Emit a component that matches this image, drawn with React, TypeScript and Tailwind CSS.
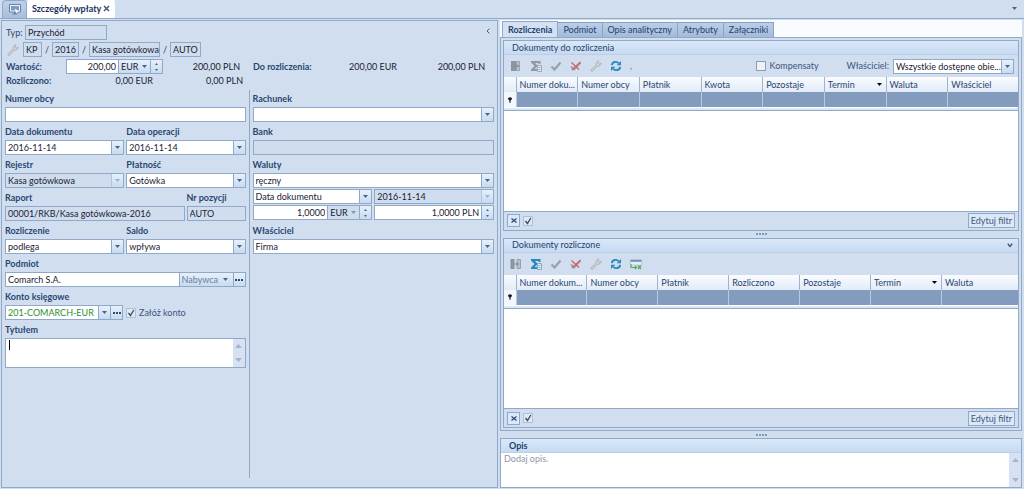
import { useId, type ReactNode } from "react";

const BTN = "bg-gradient-to-b from-[#e6f0fb] to-[#c9dbf0]";
const CTRL = "h-[15px] border border-[#91a9c8]";

function Down({ className = "text-[#4a6286]" }: { className?: string }) {
  return (
    <svg viewBox="0 0 5 3" className={`h-[3px] w-[5px] ${className}`} aria-hidden="true">
      <path d="M0 0h5L2.5 3z" fill="currentColor" />
    </svg>
  );
}

function Field({ label, children, className = "" }: { label: string; children: (id: string) => ReactNode; className?: string }) {
  const id = useId();
  return (
    <div className={`flex h-[33px] min-w-0 flex-col ${className}`}>
      <label htmlFor={id} className="h-[17px] shrink-0 leading-[17px] font-bold whitespace-nowrap text-[#2a4770]">
        {label}
      </label>
      {children(id)}
    </div>
  );
}

function Select({ id, value, disabled = false, className = "", label }: { id?: string; value: string; disabled?: boolean; className?: string; label?: string }) {
  return (
    <div className={`relative flex min-w-0 ${CTRL} ${disabled ? "bg-[#cfddee]" : "bg-white"} ${className}`}>
      <select id={id} aria-label={label} disabled={disabled} defaultValue={value} className="w-full min-w-0 appearance-none truncate pr-3 pl-[2px] leading-[13px] text-[#1a2233] opacity-100 outline-none">
        <option>{value}</option>
      </select>
      <span className={`pointer-events-none absolute inset-y-0 right-0 flex w-3 items-center justify-center border-l ${disabled ? "border-[#b4c6de]" : "border-[#91a9c8]"} ${BTN}`}>
        <Down className={disabled ? "text-[#9fb2cc]" : "text-[#4a6286]"} />
      </span>
    </div>
  );
}

function TextBox({ id, value = "", readOnly = false, className = "", label }: { id?: string; value?: string; readOnly?: boolean; className?: string; label?: string }) {
  return (
    <input
      id={id}
      aria-label={label}
      defaultValue={value}
      readOnly={readOnly}
      className={`min-w-0 pl-[2px] leading-[13px] text-[#1a2233] outline-none ${CTRL} ${readOnly ? "bg-[#cfddee]" : "bg-white"} ${className}`}
    />
  );
}

function Spin() {
  return (
    <button type="button" aria-label="Zmień wartość" className={`flex w-3 shrink-0 flex-col items-center justify-center gap-[4px] border-l border-[#91a9c8] ${BTN}`}>
      <svg viewBox="0 0 3 2" className="h-[2px] w-[3px]"><path d="M0 2h3L1.5 0z" fill="#4a6286" /></svg>
      <svg viewBox="0 0 3 2" className="h-[2px] w-[3px]"><path d="M0 0h3L1.5 2z" fill="#4a6286" /></svg>
    </button>
  );
}

function Amount({ id, value, unit, locked = false, label, className = "" }: { id?: string; value: string; unit?: string; locked?: boolean; label: string; className?: string }) {
  return (
    <div className={`flex min-w-0 bg-white ${CTRL} ${className}`}>
      <input id={id} aria-label={label} defaultValue={value} className="w-full min-w-0 flex-1 pr-[2px] text-right leading-[13px] text-[#1a2233] outline-none" />
      {unit && (
        <div className={`relative flex w-8 shrink-0 border-l border-[#91a9c8] ${locked ? "bg-[#cfddee]" : BTN}`}>
          <select aria-label={`${label} – waluta`} defaultValue={unit} className="w-full appearance-none pl-[2px] leading-[13px] text-[#1a2233] outline-none">
            <option>{unit}</option>
          </select>
          <span className="pointer-events-none absolute inset-y-0 right-[3px] flex items-center"><Down className={locked ? "text-[#8096b5]" : "text-[#4a6286]"} /></span>
        </div>
      )}
      <Spin />
    </div>
  );
}

function Wrench({ className }: { className: string }) {
  return (
    <svg viewBox="0 0 12 12" className={className} aria-hidden="true">
      <path d="M1.2 9.6 6 5.4C5.400 3.300 6.600 1.300 9 .9L7.800 2.800 9.200 4.300 11.200 3.100C11 5.400 9 6.700 7.100 6.300L2.800 11.200C1.700 12 .3 10.700 1.200 9.600Z" fill="#d3d3d0" stroke="#a6abb3" strokeWidth=".8" />
    </svg>
  );
}

function ToolButton({ label, children }: { label: string; children: ReactNode }) {
  return (
    <button type="button" aria-label={label} className="flex size-3 items-center justify-center">
      {children}
    </button>
  );
}

function Tools({ active }: { active?: boolean }) {
  const icon = "size-3";
  return (
    <div className="flex items-center gap-2">
      <ToolButton label="Powiąż">
        {active ? (
          <svg viewBox="0 0 12 12" className={icon}>
            <path d="M.5 1h4v10h-4z" fill="#8c949f" />
            <path d="M7 1.500h3.500v9H7z" fill="#b9c1cb" stroke="#98a1ad" />
            <path d="M4 6h4.500M7 4.500 8.500 6 7 7.500" stroke="#7d8898" fill="none" />
          </svg>
        ) : (
          <svg viewBox="0 0 12 12" className={icon}>
            <path d="M1 1h5.500v10H1z" fill="#8c949f" />
            <path d="M6.500 1.500H9.500v9h-3z" fill="#bcc3cd" stroke="#9aa2ad" />
            <path d="M5 6h3.500M7 4.500 8.500 6 7 7.500" stroke="#7d8898" fill="none" />
          </svg>
        )}
      </ToolButton>
      <ToolButton label="Suma">
        <svg viewBox="0 0 12 12" className={icon}>
          <path d="M1 1h9.500v3H9L8 3H5l3 3-3.500 3H7v2H1V9.500L4.500 6 1 2.500Z" fill={active ? "#2f86b8" : "#92999f"} />
          <path d="M7.500 5.500h4v6h-4z" fill="#e4eaf2" stroke={active ? "#6d9dbd" : "#9098a2"} strokeWidth=".8" />
          <path d="M8.500 7.500h2M8.500 9.500h2" stroke={active ? "#6d9dbd" : "#9098a2"} strokeWidth=".8" />
        </svg>
      </ToolButton>
      <ToolButton label="Zatwierdź">
        <svg viewBox="0 0 12 12" className={icon}><path d="m1.500 6.500 3 3 6-7" fill="none" stroke="#9ba1a8" strokeWidth="2.300" /></svg>
      </ToolButton>
      <ToolButton label="Anuluj">
        <svg viewBox="0 0 12 12" className={icon}>
          <path d="m1 6.500 3 3 6.500-7" fill="none" stroke="#a2a3aa" strokeWidth="2" />
          <path d="m1.500 2.500 7.500 7M10.500 2l-8.500 8" fill="none" stroke="#cf5f62" strokeWidth="1.200" />
        </svg>
      </ToolButton>
      <ToolButton label="Narzędzia"><Wrench className={icon} /></ToolButton>
      <ToolButton label="Odśwież">
        <svg viewBox="0 0 12 12" className={icon}>
          <path d="M1.800 5.200C2.300 1.600 6.500.900 8.600 3.200M10.200 6.800C9.700 10.400 5.500 11.100 3.400 8.800" fill="none" stroke="#2a8bbd" strokeWidth="1.900" />
          <path d="M11 1v4.300H6.700zM1 11V6.700h4.300z" fill="#2a8bbd" />
        </svg>
      </ToolButton>
      {active ? (
        <ToolButton label="Eksportuj">
          <svg viewBox="0 0 12 12" className={icon}>
            <path d="M.5 2h11v5H.5z" fill="#e5edf6" stroke="#a9b9cc" strokeWidth=".6" />
            <path d="M.5 1.800h11v2H.5z" fill="#6f93b8" />
            <path d="M1 6v3.500h5M5 8l1.500 1.500L5 11M8 7.500l3 3.500M11 7.500 8 11" fill="none" stroke="#55ab57" strokeWidth="1.200" />
          </svg>
        </ToolButton>
      ) : (
        <span className="text-[#5f7597]">,</span>
      )}
    </div>
  );
}

function FilterTable({ columns, label, wide = false }: { columns: string[]; label: string; wide?: boolean }) {
  return (
    <div className="flex flex-1 flex-col bg-white">
      <table className="w-full table-fixed border-collapse" aria-label={label}>
        <colgroup>
          <col className="w-[12px]" />
          {columns.map((c, i) => (
            <col key={c} className={i === columns.length - 1 ? "" : wide ? "w-[13.8%]" : "w-[12%]"} />
          ))}
        </colgroup>
        <thead>
          <tr className="h-[15px] bg-gradient-to-b from-[#fafcff] to-[#e1ebf8] text-left text-[#2a456e]">
            <th aria-label="Filtr" className="p-0" />
            {columns.map((c) => (
              <th key={c} scope="col" className="border-l border-[#9db3d0] p-0 pl-[3px] leading-[15px] font-normal whitespace-nowrap">
                {c === "Termin" ? (
                  <span className="flex items-center justify-between">
                    {c}
                    <Down className="mr-1 shrink-0 text-black" />
                  </span>
                ) : (
                  c
                )}
              </th>
            ))}
          </tr>
        </thead>
        <tbody>
          <tr className="h-[15px] bg-[#839cbd]">
            <td className="bg-[#f3f7fc] p-0">
              <svg viewBox="0 0 5 7" className="mx-auto h-[6px] w-[4px]" aria-label="Filtruj">
                <path d="M2.500 0C4 0 5 .900 5 2S3.500 3.500 3.200 4.500V7H1.800V4.500C1.500 3.500 0 3 0 2S1 0 2.500 0Z" fill="#151a22" />
              </svg>
            </td>
            {columns.map((c) => (
              <td key={c} className="border-l border-[#b9c9de] p-0" />
            ))}
          </tr>
        </tbody>
      </table>
      <div className="mt-[1px] h-[3px] border-b border-[#91a9c8] bg-[#dce7f4]" />
    </div>
  );
}

function FilterFooter() {
  return (
    <div className="flex h-[19px] shrink-0 items-center gap-[3px] border-t border-[#91a9c8] px-[3px]">
      <button type="button" aria-label="Wyczyść filtr" className="flex size-[13px] items-center justify-center border border-[#91a9c8] bg-[#dce8f6]">
        <svg viewBox="0 0 6 5" className="h-[5px] w-[6px]"><path d="M.5.500 5.500 4.500M5.500.500.500 4.500" stroke="#2c466d" strokeWidth="1.200" /></svg>
      </button>
      <Tick label="Włącz filtr" checked />
      <button type="button" className="ml-auto h-[15px] border border-[#91a9c8] bg-[#dce8f6] px-[2px] leading-[13px] text-[#40587e]">
        Edytuj filtr
      </button>
    </div>
  );
}

function Tick({ label, checked = false, id }: { label?: string; checked?: boolean; id?: string }) {
  return (
    <span className="relative flex size-[10px] shrink-0">
      <input id={id} type="checkbox" aria-label={label} defaultChecked={checked} className={`peer size-[10px] appearance-none border ${checked ? "border-[#b0c0d6] bg-[#dfe9f5]" : "border-[#8d9cb1] bg-[#eef2f7]"}`} />
      <svg viewBox="0 0 10 10" className="pointer-events-none absolute inset-0 hidden size-[10px] peer-checked:block">
        <path d="m2.500 5 2 2.500L7.800 2" fill="none" stroke="#3b4a63" strokeWidth="1.300" />
      </svg>
    </span>
  );
}

function Splitter() {
  return (
    <div className="flex h-[7px] shrink-0 items-center justify-center gap-[1px]">
      {[0, 1, 2, 3].map((n) => (
        <span key={n} className="h-[2px] w-[2px] bg-[#7f98bb]" />
      ))}
    </div>
  );
}

function PanelTitle({ children, className = "" }: { children: ReactNode; className?: string }) {
  return (
    <div className={`flex h-[14px] shrink-0 items-center justify-between border-b border-[#bccfe7] bg-gradient-to-b from-[#dae8f8] to-[#c6daf2] pr-[5px] pl-2 text-[#24426e] ${className}`}>
      {children}
    </div>
  );
}

function ScrollArrows() {
  return (
    <div className="flex w-3 shrink-0 flex-col items-center justify-between bg-[#d6e2f1] py-[5px] text-[#a3b5cf]">
      <svg viewBox="0 0 7 4" className="h-[4px] w-[7px]"><path d="M0 4h7L3.500 0z" fill="currentColor" /></svg>
      <svg viewBox="0 0 7 4" className="h-[4px] w-[7px]"><path d="M0 0h7L3.500 4z" fill="currentColor" /></svg>
    </div>
  );
}

function More() {
  return (
    <button type="button" aria-label="Więcej" className={`flex w-3 shrink-0 items-center justify-center gap-[1px] border-l border-[#91a9c8] ${BTN}`}>
      {[0, 1, 2].map((n) => (
        <span key={n} className="h-[2px] w-[2px] bg-[#33486b]" />
      ))}
    </button>
  );
}

function FormHeader() {
  return (
    <div className="grid grid-cols-2 gap-x-[7px]">
      <div>
        <div className="flex h-[17px] items-center text-[#2b4570]">
          <label htmlFor="typ" className="w-5 pl-[1px]">Typ:</label>
          <TextBox id="typ" value="Przychód" readOnly className="w-[82px]" />
        </div>
        <div className="flex h-[17px] items-center text-[#2b4570]">
          <Wrench className="ml-[2px] size-3" />
          <TextBox label="Symbol" value="KP" readOnly className="ml-1 w-[19px]" />
          <span className="w-[10px] text-center">/</span>
          <TextBox label="Rok" value="2016" readOnly className="w-[27px]" />
          <span className="w-[10px] text-center">/</span>
          <TextBox label="Rejestr" value="Kasa gotówkowa" readOnly className="w-[71px]" />
          <span className="w-[10px] text-center">/</span>
          <TextBox label="Numer" value="AUTO" readOnly className="w-[31px]" />
        </div>
        <div className="flex h-[17px] items-center">
          <label htmlFor="wartosc" className="w-[61px] pl-[1px] font-bold text-[#2a4770]">Wartość:</label>
          <Amount id="wartosc" label="Wartość" value="200,00" unit="EUR" className="w-[97px]" />
          <span className="flex-1 pr-[6px] text-right">200,00 PLN</span>
        </div>
        <div className="mb-[3px] flex h-3 items-center">
          <span className="w-[61px] pl-[1px] font-bold text-[#2a4770]">Rozliczono:</span>
          <span className="w-[87px] text-right">0,00 EUR</span>
          <span className="flex-1 pr-[3px] text-right">0,00 PLN</span>
        </div>
      </div>
      <div className="flex flex-col">
        <button type="button" aria-label="Zwiń" className="ml-auto flex h-[14px] w-3 items-center justify-center">
          <svg viewBox="0 0 4 6" className="h-[6px] w-[4px]"><path d="M3.500.500 1 3l2.500 2.500" fill="none" stroke="#48618a" /></svg>
        </button>
        <div className="mt-[20px] flex h-[17px] items-center">
          <span className="w-[61px] font-bold whitespace-nowrap text-[#2a4770]">Do rozliczenia:</span>
          <span className="w-[83px] text-right">200,00 EUR</span>
          <span className="flex-1 pr-[9px] text-right">200,00 PLN</span>
        </div>
      </div>
    </div>
  );
}

function PaymentForm() {
  return (
    <form className="flex w-[497px] shrink-0 flex-col border border-[#91a9c8] px-[3px] pt-[3px] pb-[9px]">
      <FormHeader />
      <div className="grid flex-1 grid-cols-2">
        <div className="border-r border-[#91a9c8] pr-[3px]">
          <Field label="Numer obcy">{(id) => <TextBox id={id} />}</Field>
          <div className="grid grid-cols-2 gap-x-[2px]">
            <Field label="Data dokumentu">{(id) => <Select id={id} value="2016-11-14" />}</Field>
            <Field label="Data operacji">{(id) => <Select id={id} value="2016-11-14" />}</Field>
            <Field label="Rejestr">{(id) => <Select id={id} value="Kasa gotówkowa" disabled />}</Field>
            <Field label="Płatność">{(id) => <Select id={id} value="Gotówka" />}</Field>
          </div>
          <div className="flex gap-[2px]">
            <Field label="Raport" className="flex-1">{(id) => <TextBox id={id} value="00001/RKB/Kasa gotówkowa-2016" readOnly />}</Field>
            <Field label="Nr pozycji" className="w-[59px]">{(id) => <TextBox id={id} value="AUTO" readOnly />}</Field>
          </div>
          <div className="grid grid-cols-2 gap-x-[2px]">
            <Field label="Rozliczenie">{(id) => <Select id={id} value="podlega" />}</Field>
            <Field label="Saldo">{(id) => <Select id={id} value="wpływa" />}</Field>
          </div>
          <Field label="Podmiot">
            {(id) => (
              <div className={`flex bg-white ${CTRL}`}>
                <input id={id} defaultValue="Comarch S.A." className="min-w-0 flex-1 px-[2px] leading-[13px] outline-none" />
                <div className={`relative flex w-[54px] border-l border-[#91a9c8] ${BTN}`}>
                  <select aria-label="Rola podmiotu" className="w-full appearance-none pl-[2px] leading-[13px] text-[#6880a3] outline-none">
                    <option>Nabywca</option>
                  </select>
                  <span className="pointer-events-none absolute inset-y-0 right-[5px] flex items-center"><Down /></span>
                </div>
                <More />
              </div>
            )}
          </Field>
          <div className="flex gap-[3px]">
            <Field label="Konto księgowe" className="w-[118px]">
              {(id) => (
                <div className={`flex bg-white ${CTRL}`}>
                  <input id={id} defaultValue="201-COMARCH-EUR" className="min-w-0 flex-1 px-[2px] leading-[13px] text-[#2b8f2f] outline-none" />
                  <button type="button" aria-label="Wybierz konto" className={`flex w-3 shrink-0 items-center justify-center border-l border-[#91a9c8] ${BTN}`}><Down /></button>
                  <More />
                </div>
              )}
            </Field>
            <div className="mb-[1px] flex h-[15px] items-center gap-[3px] self-end text-[#3c5580]">
              <Tick id="zaloz" checked />
              <label htmlFor="zaloz">Załóż konto</label>
            </div>
          </div>
          <div className="flex flex-col">
            <label htmlFor="tytulem" className="leading-[17px] font-bold text-[#2a4770]">Tytułem</label>
            <div className="flex h-[30px] border border-[#91a9c8] bg-white pl-[3px]">
              <span aria-hidden="true" className="mt-[1px] h-[10px] w-px bg-black" />
              <textarea id="tytulem" className="min-w-0 flex-1 resize-none leading-[13px] text-black outline-none" />
              <ScrollArrows />
            </div>
          </div>
        </div>
        <div className="pl-[3px]">
          <Field label="Rachunek">{(id) => <Select id={id} value="" />}</Field>
          <Field label="Bank">{(id) => <TextBox id={id} readOnly />}</Field>
          <div className="flex h-[66px] flex-col gap-[1px]">
            <div className="flex flex-col">
              <label htmlFor="waluty" className="leading-[17px] font-bold text-[#2a4770]">Waluty</label>
              <Select id="waluty" value="ręczny" />
            </div>
            <div className="grid grid-cols-2 gap-[2px] gap-y-[1px]">
              <Select label="Rodzaj daty" value="Data dokumentu" />
              <Select label="Data kursu" value="2016-11-14" disabled />
              <Amount label="Kurs" value="1,0000" unit="EUR" locked />
              <Amount label="Kurs w walucie systemowej" value="1,0000 PLN" />
            </div>
          </div>
          <Field label="Właściciel">{(id) => <Select id={id} value="Firma" />}</Field>
        </div>
      </div>
    </form>
  );
}

const TABS = ["Podmiot", "Opis analityczny", "Atrybuty", "Załączniki"];

function Settlements() {
  return (
    <section className="flex min-w-0 flex-1 flex-col">
      <div role="tablist" className="flex h-[17px] shrink-0 items-end bg-[#f9fbfe] pl-[2px] text-[#24426e]">
        <button type="button" role="tab" aria-selected="true" className="h-[16px] border border-b-0 border-[#91a9c8] bg-[#d3e1f2] px-[5px] font-bold">
          Rozliczenia
        </button>
        {TABS.map((t) => (
          <button key={t} type="button" role="tab" aria-selected="false" className="h-[15px] border border-b-0 border-l-0 border-[#8aa3c5] bg-gradient-to-b from-[#b9cee8] to-[#a3bbda] px-[5px]">
            {t}
          </button>
        ))}
      </div>
      <div className="flex flex-1 flex-col border border-[#91a9c8] p-[2px]">
        <div className="flex flex-1 flex-col border border-[#91a9c8]">
          <PanelTitle>Dokumenty do rozliczenia</PanelTitle>
          <div className="flex h-[22px] shrink-0 items-center justify-between pr-1 pl-[6px]">
            <Tools />
            <div className="flex items-center text-[#3c5580]">
              <Tick id="kompensaty" />
              <label htmlFor="kompensaty" className="ml-1 w-[77px]">Kompensaty</label>
              <label htmlFor="wlasciciel" className="mr-1">Właściciel:</label>
              <Select id="wlasciciel" value="Wszystkie dostępne obie..." className="w-[121px]" />
            </div>
          </div>
          <FilterTable label="Dokumenty do rozliczenia" columns={["Numer doku...", "Numer obcy", "Płatnik", "Kwota", "Pozostaje", "Termin", "Waluta", "Właściciel"]} />
          <FilterFooter />
        </div>
        <Splitter />
        <div className="flex flex-1 flex-col border border-[#91a9c8]">
          <PanelTitle>
            Dokumenty rozliczone
            <svg viewBox="0 0 6 5" className="h-[5px] w-[6px]"><path d="m.8.800 2.200 2.600L5.200.800" fill="none" stroke="#3b557e" strokeWidth="1.400" /></svg>
          </PanelTitle>
          <div className="flex h-[22px] shrink-0 items-center pl-[6px]">
            <Tools active />
          </div>
          <FilterTable wide label="Dokumenty rozliczone" columns={["Numer dokum...", "Numer obcy", "Płatnik", "Rozliczono", "Pozostaje", "Termin", "Waluta"]} />
          <FilterFooter />
        </div>
      </div>
      <Splitter />
      <div className="flex shrink-0 flex-col border border-[#91a9c8]">
        <PanelTitle className="font-bold">
          <label htmlFor="opis">Opis</label>
        </PanelTitle>
        <div className="flex h-[34px] bg-white">
          <textarea id="opis" placeholder="Dodaj opis." className="min-w-0 flex-1 resize-none px-[3px] leading-[11px] outline-none placeholder:text-[#8e98a8]" />
          <ScrollArrows />
        </div>
      </div>
    </section>
  );
}

export default function App() {
  return (
    <main className="flex min-h-screen flex-col bg-[#d0deef] font-['Lato','Noto_Sans',sans-serif] text-[9px] leading-3 text-[#1a2233]">
      <header className="flex h-[19px] shrink-0 items-end border-b border-[#91a9c8] pl-[2px]">
        <button type="button" aria-label="Pulpit" className="flex h-[18px] w-[25px] items-center justify-center rounded-t-sm border border-b-0 border-[#91a9c8] bg-gradient-to-b from-[#bdd1ea] to-[#a6bedd]">
          <svg viewBox="0 0 12 11" className="h-[11px] w-[12px]">
            <path d="M.5.500h11v7.500H.5z" fill="#eef3f9" stroke="#687f9f" />
            <path d="M2 2h8v4.500H2z" fill="#7c9cc4" />
            <path d="M5 8h2v1.500h1.500v1h-5v-1H5z" fill="#687f9f" />
            <path d="m6 4.500 4 3.500H8l-1 1.500z" fill="#fff" />
          </svg>
        </button>
        <div className="flex h-[19px] w-[88px] items-center justify-between rounded-t-sm bg-white px-[5px] font-bold whitespace-nowrap text-[#17335c]">
          Szczegóły wpłaty
          <button type="button" aria-label="Zamknij" className="flex">
            <svg viewBox="0 0 7 7" className="size-[7px]"><path d="m1 1 5 5M6 1 1 6" stroke="#45597a" strokeWidth="1.500" /></svg>
          </button>
        </div>
        <button type="button" aria-label="Lista kart" className="mr-[7px] mb-[8px] ml-auto"><Down /></button>
      </header>
      <div className="flex flex-1 gap-[2px] pt-[1px] pr-[2px] pb-[1px] pl-[1px]">
        <PaymentForm />
        <Settlements />
      </div>
    </main>
  );
}
